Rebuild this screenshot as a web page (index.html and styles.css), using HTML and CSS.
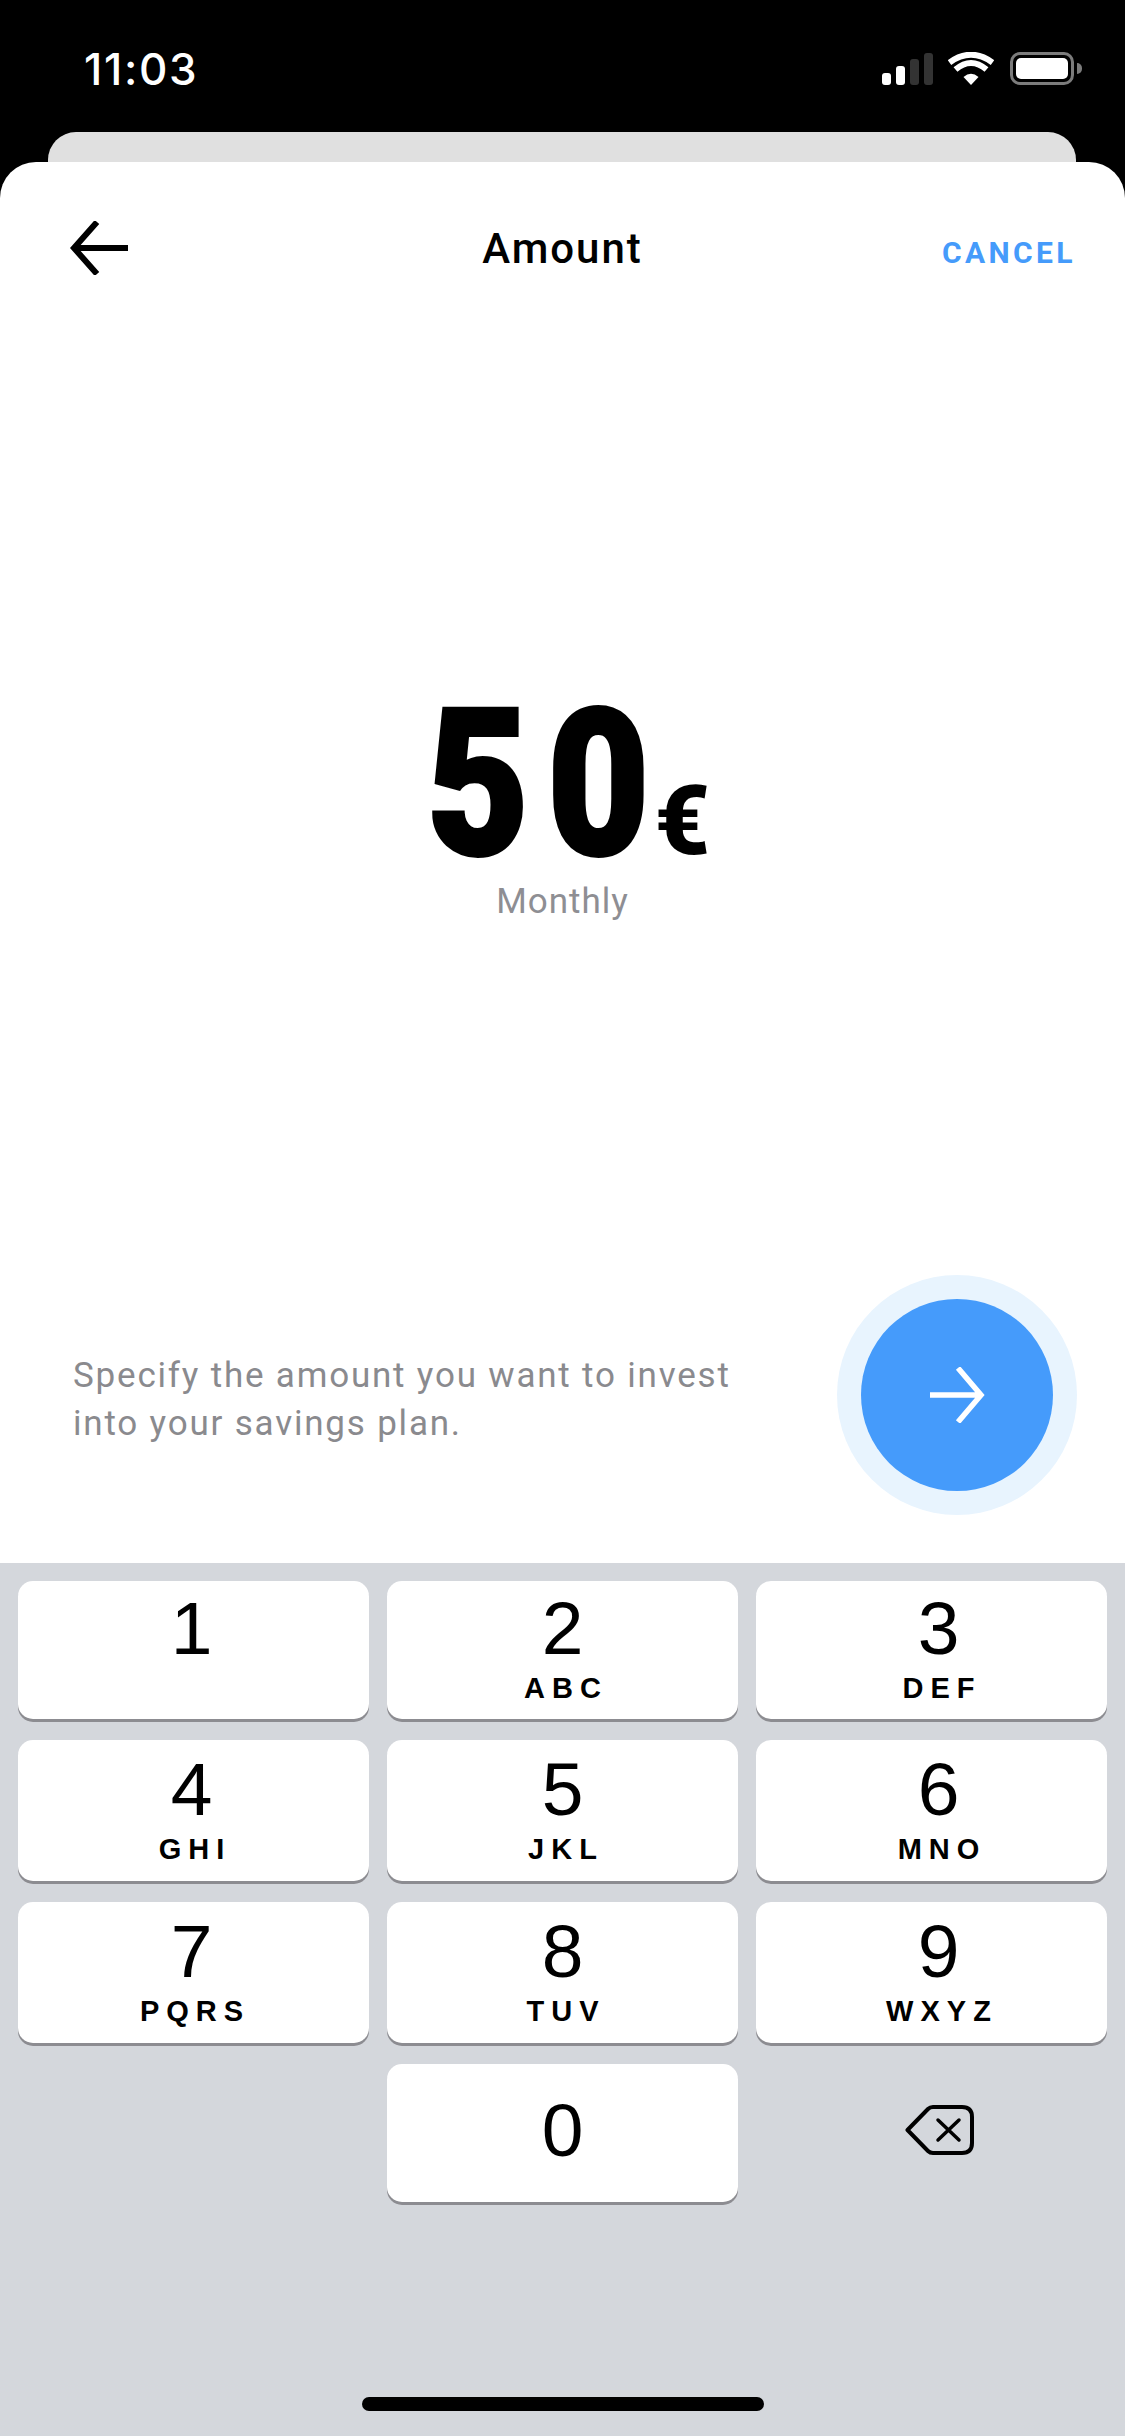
FILE: index.html
```html
<!DOCTYPE html>
<html lang="en">
<head>
    <meta charset="UTF-8">
    <meta name="viewport" content="width=device-width, initial-scale=1.0">
    <title>Amount</title>
    <link rel="stylesheet" href="styles.css">
</head>
<body>
  <div class="phone">

    <div class="statusBar">
      <span class="time">11:03</span>
      <div class="statusIcons">
        <div class="signal">
          <span class="bar bar1"></span>
          <span class="bar bar2"></span>
          <span class="bar bar3 off"></span>
          <span class="bar bar4 off"></span>
        </div>
        <svg class="wifi" width="46" height="33" viewBox="0 0 46 33">
          <path d="M23 33 L15.500 25 Q23 18.500 30.500 25 Z" fill="#fff"/>
          <path d="M7.500 17.500 Q23 4.500 38.500 17.500" fill="none" stroke="#fff" stroke-width="6"/>
          <path d="M1.500 10.500 Q23 -5 44.500 10.500" fill="none" stroke="#fff" stroke-width="6"/>
        </svg>
        <div class="battery">
          <div class="batteryFill"></div>
        </div>
        <span class="batteryTip"></span>
      </div>
    </div>

    <div class="backCard"></div>

    <div class="sheet">
      <div class="header">
        <svg class="backArrow" width="58" height="54" viewBox="0 0 58 54">
          <path d="M58 27 H4 M27 1 L4 27 L27 53" fill="none" stroke="#000" stroke-width="6"/>
        </svg>
        <span class="title">Amount</span>
        <span class="cancel">CANCEL</span>
      </div>

      <div class="amountBox">
        <div class="amount">
          <div class="digits"><span>5</span><span>0</span></div>
          <span class="euro">€</span>
        </div>
        <div class="period">Monthly</div>
      </div>

      <div class="footerRow">
        <p class="hint">Specify the amount you want to invest<br>into your savings plan.</p>
        <div class="nextRing">
          <div class="nextBtn">
            <svg width="56" height="56" viewBox="0 0 56 56">
              <path d="M1 28 H52 M29 1 L52 28 L29 55" fill="none" stroke="#fff" stroke-width="5.500"/>
            </svg>
          </div>
        </div>
      </div>
    </div>

    <div class="keyboard">
      <div class="keys">
        <div class="key"><span class="num">1</span><span class="letters">&nbsp;</span></div>
        <div class="key"><span class="num">2</span><span class="letters">ABC</span></div>
        <div class="key"><span class="num">3</span><span class="letters">DEF</span></div>
        <div class="key"><span class="num">4</span><span class="letters">GHI</span></div>
        <div class="key"><span class="num">5</span><span class="letters">JKL</span></div>
        <div class="key"><span class="num">6</span><span class="letters">MNO</span></div>
        <div class="key"><span class="num">7</span><span class="letters">PQRS</span></div>
        <div class="key"><span class="num">8</span><span class="letters">TUV</span></div>
        <div class="key"><span class="num">9</span><span class="letters">WXYZ</span></div>
        <div class="key empty"></div>
        <div class="key zero"><span class="num">0</span></div>
        <div class="key empty del">
          <svg width="70" height="50" viewBox="0 0 70 50">
            <path d="M2.500 25 L23 4 Q25 2 28 2 H57 Q67 2 67 12 V38 Q67 48 57 48 H28 Q25 48 23 46 Z" fill="none" stroke="#000" stroke-width="4" stroke-linejoin="round"/>
            <path d="M33 15 L54 35 M54 15 L33 35" fill="none" stroke="#000" stroke-width="3.500" stroke-linecap="round"/>
          </svg>
        </div>
      </div>
      <div class="homeBar"></div>
    </div>

  </div>
</body>
</html>
```

FILE: styles.css
```css
* {
  box-sizing: border-box;
}

html, body {
  margin: 0;
  padding: 0;
  background: #000;
}

.phone {
  width: 1125px;
  height: 2436px;
  display: flex;
  flex-direction: column;
  background: #000;
  overflow: hidden;
  font-family: "Roboto", "Liberation Sans", sans-serif;
}

/* status bar */

.statusBar {
  height: 132px;
  flex: none;
  display: flex;
  justify-content: space-between;
  align-items: flex-start;
  padding: 52px 43px 0 84px;
}

.time {
  font-family: "Inter", "Liberation Sans", sans-serif;
  font-size: 44px;
  line-height: 34px;
  font-weight: 500;
  color: #fff;
  letter-spacing: 1.700px;
}

.statusIcons {
  display: flex;
  align-items: center;
  height: 33px;
}

.signal {
  display: flex;
  align-items: flex-end;
  gap: 5px;
  height: 33px;
  width: 51px;
  margin-right: 15px;
}

.bar {
  width: 9px;
  background: #fff;
  border-radius: 3px;
}

.bar.off {
  background: #333;
}

.bar1 { height: 12px; }
.bar2 { height: 19px; }
.bar3 { height: 26px; }
.bar4 { height: 32px; }

.wifi {
  margin-right: 16px;
}

.battery {
  width: 64px;
  height: 33px;
  border: 3px solid #7c7c7c;
  border-radius: 10px;
  padding: 3px;
}

.batteryFill {
  width: 100%;
  height: 100%;
  background: #fff;
  border-radius: 5px;
}

.batteryTip {
  width: 5px;
  height: 11px;
  margin-left: 3px;
  background: #7c7c7c;
  border-radius: 0 5px 5px 0;
}

/* cards */

.backCard {
  height: 30px;
  flex: none;
  margin: 0 49px 0 48px;
  background: #e0e0e0;
  border-radius: 28px 28px 0 0;
}

.sheet {
  height: 1401px;
  flex: none;
  display: flex;
  flex-direction: column;
  background: #fff;
  border-radius: 36px 36px 0 0;
}

.header {
  height: 172px;
  flex: none;
  display: flex;
  align-items: flex-start;
  justify-content: space-between;
  padding: 59px 49px 0 70px;
  position: relative;
}

.title {
  position: absolute;
  left: 0;
  right: 0;
  top: 63px;
  text-align: center;
  font-size: 42px;
  line-height: 48px;
  font-weight: 500;
  letter-spacing: 2px;
  color: #000;
}

.cancel {
  margin-top: 14px;
  font-size: 30px;
  line-height: 36px;
  font-weight: 700;
  letter-spacing: 3.400px;
  color: #459bfb;
}

.amountBox {
  flex: 1;
  display: flex;
  flex-direction: column;
  align-items: center;
  padding-top: 391px;
}

.amount {
  display: flex;
  align-items: baseline;
  font-size: 204px;
  line-height: 120px;
  font-weight: 900;
  color: #000;
}

/* no DIN here, so Roboto Black gets squeezed to the same digit width */
.digits {
  display: flex;
  gap: 22px;
  -webkit-text-stroke: 4px #000;
  transform: scaleX(0.86);
  transform-origin: left;
  margin-left: 12px;
  margin-right: -31px;
}

.euro {
  font-size: 96px;
}

.period {
  font-size: 35px;
  line-height: 42px;
  color: #8e8e93;
  letter-spacing: 1px;
}

.footerRow {
  flex: none;
  height: 288px;
  display: flex;
  justify-content: space-between;
  align-items: flex-start;
  padding: 0 48px 0 73px;
}

.hint {
  margin: 77px 0 0;
  font-size: 35px;
  line-height: 48px;
  letter-spacing: 1.800px;
  color: #8a8a8e;
}

.nextRing {
  width: 240px;
  height: 240px;
  border-radius: 50%;
  background: #e8f4fe;
  display: flex;
  align-items: center;
  justify-content: center;
}

.nextBtn {
  width: 192px;
  height: 192px;
  border-radius: 50%;
  background: #459bfb;
  display: flex;
  align-items: center;
  justify-content: center;
}

/* keyboard */

.keyboard {
  flex: 1;
  background: #d4d7dc;
  padding: 18px 18px 0;
  position: relative;
}

.keys {
  display: grid;
  grid-template-columns: repeat(3, 351px);
  grid-template-rows: 138px 141px 141px 138px;
  column-gap: 18px;
  row-gap: 21px;
}

.key {
  background: #fff;
  border-radius: 15px;
  box-shadow: 0 3px 0 #8c8c91;
  display: flex;
  flex-direction: column;
  align-items: center;
  justify-content: center;
  padding-bottom: 7px;
  font-family: "Liberation Sans", Arial, sans-serif;
  color: #000;
}

/* labels on the outer columns sit off centre */
.key:nth-child(3n+1) {
  padding-right: 4px;
}

.key:nth-child(3n) {
  padding-left: 14px;
}

.num {
  font-size: 75px;
  line-height: 76px;
}

.letters {
  margin-top: 7px;
  margin-right: -7px;
  font-size: 29px;
  line-height: 30px;
  font-weight: 700;
  letter-spacing: 7px;
}

.key.zero {
  padding-bottom: 6px;
}

.key.empty {
  background: none;
  box-shadow: none;
}

.key.del {
  padding: 0 0 6px 16px;
}

.homeBar {
  position: absolute;
  left: 362px;
  bottom: 25px;
  width: 402px;
  height: 14px;
  border-radius: 7px;
  background: #000;
}
```
